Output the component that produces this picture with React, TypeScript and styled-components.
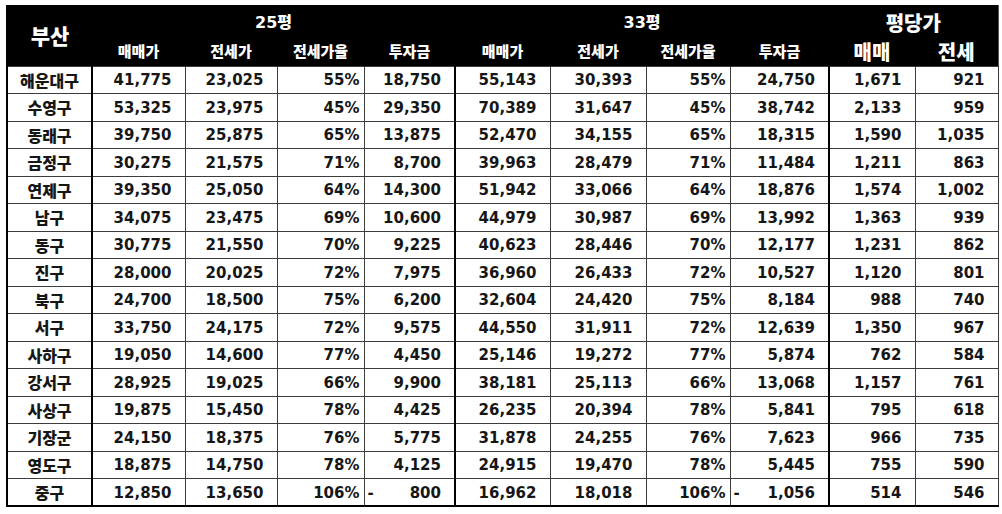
import React from "react";
import styled, { createGlobalStyle } from "styled-components";

const Global = createGlobalStyle`
  html, body { margin: 0; padding: 0; background: #fff; }
  body { font-family: "DejaVu Sans", "Noto Sans CJK KR", sans-serif; }
`;

const Page = styled.div`
  width: 1002px;
  height: 514px;
  padding: 5px 0 0 6px;
  box-sizing: border-box;
  background: #fff;
`;

const Table = styled.table`
  border-collapse: collapse;
  table-layout: fixed;
  width: 991px;
  border-left: 2px solid #000;
  border-right: 1px solid #555;
  border-bottom: 2px solid #000;
  color: #161616;
`;

const HeadCell = styled.th<{ $size: number; $h?: number; $pad?: string }>`
  background: #000;
  color: #fff;
  font-family: "DejaVu Sans", "Noto Sans CJK KR", sans-serif;
  font-weight: 900;
  font-size: ${(p) => p.$size}px;
  text-align: center;
  vertical-align: middle;
  padding: ${(p) => p.$pad || "0"};
  height: ${(p) => (p.$h ? `${p.$h}px` : "auto")};
  box-sizing: border-box;
  border: 0;
  white-space: nowrap;
  line-height: 1;
`;

const Row = styled.tr`
  height: 27.5px;
`;

const NameCell = styled.td`
  font-family: "Noto Sans CJK KR", sans-serif;
  font-weight: 900;
  font-size: 16px;
  text-align: center;
  border: 1px solid #3c3c3c;
  border-right: 2px solid #000;
  padding: 0;
  line-height: 1;
  height: 27.5px;
  box-sizing: border-box;
`;

const NumCell = styled.td<{ $thick?: boolean; $pct?: boolean }>`
  font-family: "DejaVu Sans", sans-serif;
  font-weight: 700;
  font-size: 15px;
  text-align: right;
  padding: 2px ${(p) => (p.$pct ? "4px" : "13px")} 0 3px;
  border: 1px solid #3c3c3c;
  border-left: ${(p) => (p.$thick ? "2px solid #000" : "1px solid #3c3c3c")};
  white-space: nowrap;
  line-height: 1;
  box-sizing: border-box;
`;

const Neg = styled.span`
  display: flex;
  justify-content: space-between;
`;

type R = [string, string, string, string, string, string, string, string, string, string, string];

const data: R[] = [
  ["해운대구", "41,775", "23,025", "55%", "18,750", "55,143", "30,393", "55%", "24,750", "1,671", "921"],
  ["수영구", "53,325", "23,975", "45%", "29,350", "70,389", "31,647", "45%", "38,742", "2,133", "959"],
  ["동래구", "39,750", "25,875", "65%", "13,875", "52,470", "34,155", "65%", "18,315", "1,590", "1,035"],
  ["금정구", "30,275", "21,575", "71%", "8,700", "39,963", "28,479", "71%", "11,484", "1,211", "863"],
  ["연제구", "39,350", "25,050", "64%", "14,300", "51,942", "33,066", "64%", "18,876", "1,574", "1,002"],
  ["남구", "34,075", "23,475", "69%", "10,600", "44,979", "30,987", "69%", "13,992", "1,363", "939"],
  ["동구", "30,775", "21,550", "70%", "9,225", "40,623", "28,446", "70%", "12,177", "1,231", "862"],
  ["진구", "28,000", "20,025", "72%", "7,975", "36,960", "26,433", "72%", "10,527", "1,120", "801"],
  ["북구", "24,700", "18,500", "75%", "6,200", "32,604", "24,420", "75%", "8,184", "988", "740"],
  ["서구", "33,750", "24,175", "72%", "9,575", "44,550", "31,911", "72%", "12,639", "1,350", "967"],
  ["사하구", "19,050", "14,600", "77%", "4,450", "25,146", "19,272", "77%", "5,874", "762", "584"],
  ["강서구", "28,925", "19,025", "66%", "9,900", "38,181", "25,113", "66%", "13,068", "1,157", "761"],
  ["사상구", "19,875", "15,450", "78%", "4,425", "26,235", "20,394", "78%", "5,841", "795", "618"],
  ["기장군", "24,150", "18,375", "76%", "5,775", "31,878", "24,255", "76%", "7,623", "966", "735"],
  ["영도구", "18,875", "14,750", "78%", "4,125", "24,915", "19,470", "78%", "5,445", "755", "590"],
  ["중구", "12,850", "13,650", "106%", "-800", "16,962", "18,018", "106%", "-1,056", "514", "546"],
];

const widths = [85, 93, 92, 87, 91, 95, 96, 84, 99, 86, 83];
const thickCols = new Set([5, 9]);
const pctCols = new Set([3, 7]);

export default function App() {
  return (
    <Page>
      <Global />
      <Table>
        <colgroup>
          {widths.map((w, i) => (
            <col key={i} style={{ width: w }} />
          ))}
        </colgroup>
        <thead>
          <tr>
            <HeadCell rowSpan={2} $size={21} $pad="4px 0 0">부산</HeadCell>
            <HeadCell colSpan={4} $size={16} $h={33} $pad="3px 0 0">25평</HeadCell>
            <HeadCell colSpan={4} $size={16} $pad="3px 0 0">33평</HeadCell>
            <HeadCell colSpan={2} $size={20} $pad="5px 0 0">평당가</HeadCell>
          </tr>
          <tr>
            {["매매가", "전세가", "전세가율", "투자금", "매매가", "전세가", "전세가율", "투자금"].map((t, i) => (
              <HeadCell key={i} $size={15} $h={28} $pad="2px 0 0">{t}</HeadCell>
            ))}
            <HeadCell $size={20} $h={28} $pad="2px 0 0">매매</HeadCell>
            <HeadCell $size={20} $h={28} $pad="2px 0 0">전세</HeadCell>
          </tr>
        </thead>
        <tbody>
          {data.map((r) => (
            <Row key={r[0]}>
              <NameCell>{r[0]}</NameCell>
              {r.slice(1).map((v, j) => {
                const col = j + 1;
                const neg = v.startsWith("-");
                return (
                  <NumCell key={col} $thick={thickCols.has(col)} $pct={pctCols.has(col)}>
                    {neg ? (
                      <Neg>
                        <span>-</span>
                        <span>{v.slice(1)}</span>
                      </Neg>
                    ) : (
                      v
                    )}
                  </NumCell>
                );
              })}
            </Row>
          ))}
        </tbody>
      </Table>
    </Page>
  );
}
